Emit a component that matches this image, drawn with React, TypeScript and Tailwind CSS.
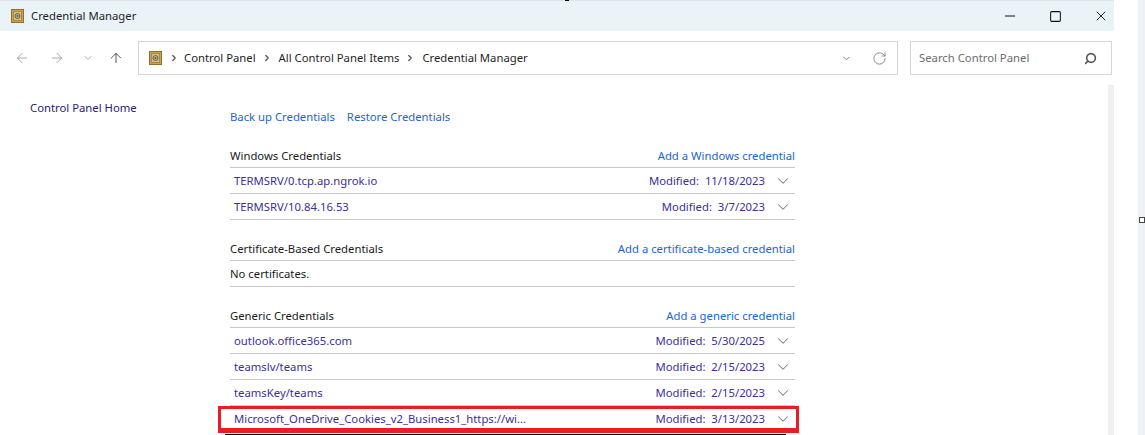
import React from "react";
import { ArrowLeft, ArrowRight, ArrowUp, ChevronDown, ChevronRight, RotateCw, Search, Minus, Square, X } from "lucide-react";

type Cred = { name: string; date: string };

const windowsCreds: Cred[] = [
  { name: "TERMSRV/0.tcp.ap.ngrok.io", date: "11/18/2023" },
  { name: "TERMSRV/10.84.16.53", date: "3/7/2023" },
];

const genericCreds: Cred[] = [
  { name: "outlook.office365.com", date: "5/30/2025" },
  { name: "teamslv/teams", date: "2/15/2023" },
  { name: "teamsKey/teams", date: "2/15/2023" },
];

const VaultIcon = () => (
  <svg width="13" height="14" viewBox="0 0 13 14" className="shrink-0">
    <rect x="0.5" y="0.5" width="12" height="13" fill="#c9a24f" stroke="#8f6f2e" />
    <rect x="2.5" y="2.5" width="8" height="9" fill="#d8bd7c" stroke="#a98a43" />
    <circle cx="6.5" cy="7" r="2.5" fill="#b5b0a0" stroke="#6f6248" />
    <circle cx="6.5" cy="7" r="0.9" fill="#5d5340" />
  </svg>
);

const CredRow = ({ name, date }: Cred) => (
  <div className="flex items-center h-[26px] border-b border-[#c8c8c8] pl-[4px] text-[#3a2f9c]">
    <span className="flex-1">{name}</span>
    <span className="whitespace-pre">{"Modified:  " + date}</span>
    <ChevronDown className="w-[18px] h-[18px] ml-[9px] mr-[3px] text-[#808080]" strokeWidth={1.4} />
  </div>
);

const SectionHeader = ({ title, action }: { title: string; action: string }) => (
  <div className="flex items-center justify-between h-[24px] border-b border-[#c8c8c8] text-[#1a1a1a]">
    <span>{title}</span>
    <span className="text-[#1a66d6]">{action}</span>
  </div>
);

export default function App() {
  return (
    <div
      className="relative flex w-[1145px] h-[435px] overflow-hidden bg-white text-[11.3px] leading-[16px]"
      style={{ fontFamily: '"Noto Sans", sans-serif' }}
    >
      {/* Window */}
      <div className="flex flex-col w-[1114px] h-full border-t border-[#dfe3e8]">
        {/* Title bar */}
        <div className="flex items-center h-[30px] bg-[#eaf3f8] pl-[11px] shrink-0">
          <VaultIcon />
          <span className="ml-[7px] text-[#1f1f1f]">Credential Manager</span>
          <div className="ml-auto flex items-center gap-[31px] pr-[5px] text-[#111]">
            <Minus className="w-[16px] h-[16px]" strokeWidth={1.5} />
            <Square className="w-[13px] h-[13px]" strokeWidth={1.9} />
            <X className="w-[16px] h-[16px]" strokeWidth={1.4} />
          </div>
        </div>

        {/* Navigation bar */}
        <div className="flex items-center h-[34px] mt-[10px] pl-[14px] pr-[2px] shrink-0">
          <ArrowLeft className="w-[16px] h-[16px] text-[#a8a8a8]" strokeWidth={1.5} />
          <ArrowRight className="w-[16px] h-[16px] ml-[19px] text-[#a8a8a8]" strokeWidth={1.5} />
          <ChevronDown className="w-[12px] h-[12px] ml-[17px] text-[#a8a8a8]" strokeWidth={2} />
          <ArrowUp className="w-[16px] h-[16px] ml-[14px] text-[#555]" strokeWidth={1.5} />
          <div className="flex items-center h-full w-[760px] ml-[14px] border border-[#d6d6d6] pl-[10px] pr-[10px] text-[#1f1f1f]">
            <VaultIcon />
            <ChevronRight className="w-[10px] h-[10px] ml-[7px] text-[#555]" strokeWidth={3} />
            <span className="ml-[5px]">Control Panel</span>
            <ChevronRight className="w-[10px] h-[10px] ml-[6px] text-[#555]" strokeWidth={3} />
            <span className="ml-[7px]">All Control Panel Items</span>
            <ChevronRight className="w-[10px] h-[10px] ml-[6px] text-[#555]" strokeWidth={3} />
            <span className="ml-[7px]">Credential Manager</span>
            <ChevronDown className="w-[11px] h-[11px] ml-auto text-[#777]" strokeWidth={2} />
            <RotateCw className="w-[15px] h-[15px] ml-[20px] text-[#8a8a8a]" strokeWidth={1.6} />
          </div>
          <div className="flex items-center h-full w-[202px] ml-[12px] border border-[#d6d6d6] pl-[8px] pr-[14px] text-[#6d6d6d]">
            <span>Search Control Panel</span>
            <Search className="w-[13px] h-[13px] ml-auto -scale-x-100 text-[#555]" strokeWidth={3} />
          </div>
        </div>

        {/* Body */}
        <div className="flex flex-1 min-h-0">
          <div className="w-[230px] shrink-0 pl-[30px] pt-[25px] text-[#2a1a7a]">Control Panel Home</div>

          <div className="w-[565px] shrink-0 pt-[34px]">
            <div className="flex gap-[12px] text-[#1a66d6]">
              <span>Back up Credentials</span>
              <span>Restore Credentials</span>
            </div>

            <div className="mt-[19px]">
              <SectionHeader title="Windows Credentials" action="Add a Windows credential" />
              {windowsCreds.map((c) => (
                <CredRow key={c.name} {...c} />
              ))}
            </div>

            <div className="mt-[17px]">
              <SectionHeader title="Certificate-Based Credentials" action="Add a certificate-based credential" />
              <div className="flex items-center h-[26px] border-b border-[#c8c8c8] text-[#1a1a1a]">No certificates.</div>
            </div>

            <div className="mt-[17px]">
              <SectionHeader title="Generic Credentials" action="Add a generic credential" />
              {genericCreds.map((c) => (
                <CredRow key={c.name} {...c} />
              ))}
              <CredRow name="Microsoft_OneDrive_Cookies_v2_Business1_https://wi..." date="3/13/2023" />
            </div>
          </div>

          <div className="ml-auto w-[6px] h-full mt-[10px] bg-[#efefef]" />
        </div>
      </div>

      {/* Right gutter */}
      <div className="flex-1 flex justify-end">
        <div className="w-[7px] h-full bg-[#eef1f7]" />
      </div>

      {/* Annotation and stray marks over the screenshot */}
      <div className="absolute left-[218px] top-[406px] w-[581px] h-[27px] border-x-[3px] border-t-[3px] border-b-[5px] border-[#ed1c24]" />
      <div className="absolute left-[225px] top-[434px] w-[561px] h-[1px] bg-black" />
      <div className="absolute left-[1139px] top-[217px] w-[6px] h-[6px] border border-[#444] bg-white" />
      <div className="absolute left-[565px] top-0 w-[4px] h-[1px] bg-black" />
    </div>
  );
}
